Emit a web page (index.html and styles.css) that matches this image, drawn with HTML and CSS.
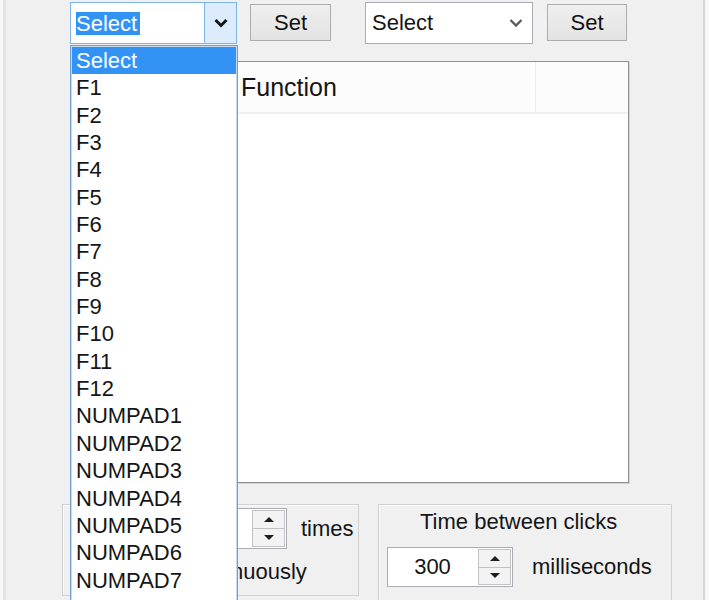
FILE: index.html
```html
<!DOCTYPE html>
<html lang="en">
<head>
  <meta charset="UTF-8">
  <meta name="viewport" content="width=device-width, initial-scale=1.0">
  <title>Hotkey Clicker</title>
  <link rel="stylesheet" href="styles.css">
</head>
<body>
  <div class="form">
    <div class="top-row">
      <div class="combo combo-focused">
        <span class="combo-text"><span class="selected-text">Select</span></span>
        <span class="combo-btn">
          <svg width="16" height="10" viewBox="0 0 16 10"><path d="M2.5 2 L8 7.5 L13.5 2" fill="none" stroke="#151515" stroke-width="3"/></svg>
        </span>
      </div>
      <button class="btn btn-first">Set</button>
      <div class="combo combo-plain">
        <span class="combo-text">Select</span>
        <span class="combo-btn">
          <svg width="16" height="10" viewBox="0 0 16 10"><path d="M2.5 2 L8 7.5 L13.5 2" fill="none" stroke="#5c5c5c" stroke-width="2.4"/></svg>
        </span>
      </div>
      <button class="btn btn-second">Set</button>
    </div>

    <div class="list-view">
      <div class="lv-header">
        <div class="lv-col col-key"></div>
        <div class="lv-col col-func">Function</div>
        <div class="lv-col col-rest"></div>
      </div>
    </div>

    <div class="bottom-row">
      <div class="group group-repeat">
        <div class="group-line">
          <div class="spin spin-repeat">
            <span class="spin-value">1</span>
            <span class="spin-btns">
              <span class="spin-up"><i class="tri-up"></i></span>
              <span class="spin-down"><i class="tri-down"></i></span>
            </span>
          </div>
          <span class="unit unit-times">times</span>
        </div>
        <label class="check-line"><span class="checkbox"></span>Run continuously</label>
      </div>

      <div class="group group-interval">
        <div class="group-title">Time between clicks</div>
        <div class="group-line interval-line">
          <div class="spin spin-interval">
            <span class="spin-value">300</span>
            <span class="spin-btns">
              <span class="spin-up"><i class="tri-up"></i></span>
              <span class="spin-down"><i class="tri-down"></i></span>
            </span>
          </div>
          <span class="unit unit-ms">milliseconds</span>
        </div>
      </div>
    </div>
  </div>

  <!-- open list of the first combo -->
  <ul class="dropdown">
    <li class="active">Select</li>
    <li>F1</li>
    <li>F2</li>
    <li>F3</li>
    <li>F4</li>
    <li>F5</li>
    <li>F6</li>
    <li>F7</li>
    <li>F8</li>
    <li>F9</li>
    <li>F10</li>
    <li>F11</li>
    <li>F12</li>
    <li>NUMPAD1</li>
    <li>NUMPAD2</li>
    <li>NUMPAD3</li>
    <li>NUMPAD4</li>
    <li>NUMPAD5</li>
    <li>NUMPAD6</li>
    <li>NUMPAD7</li>
  </ul>
</body>
</html>
```

FILE: styles.css
```css
* {
  margin: 0;
  padding: 0;
  box-sizing: border-box;
}

html {
  background: #f8f8f8;
}

body {
  position: relative;
  width: 709px;
  height: 600px;
  overflow: hidden;
  font-family: "Liberation Sans", Arial, sans-serif;
  font-size: 22px;
  color: #151515;
}

.form {
  margin-left: 3px;
  width: 702px;
  height: 600px;
  background: #f0f0f0;
  border-left: 3px solid #e4e4e4;
  border-right: 2px solid #d6d6d6;
  padding: 2px 0 0 56px;
}

/* top row: two combos and their Set buttons */
.top-row {
  display: flex;
  align-items: flex-start;
  margin-left: 8px;
  height: 42px;
}

.combo {
  display: flex;
  height: 42px;
  background: #fff;
  border: 1px solid #abadb3;
}

.combo-focused {
  width: 167px;
  border-color: #7eb4ea;
}

.combo-plain {
  width: 168px;
  margin-left: 34px;
}

.combo-text {
  flex: 1;
  display: flex;
  align-items: center;
  padding-left: 5px;
}

.combo-plain .combo-text {
  padding-left: 6px;
}

.selected-text {
  background: #3393f5;
  color: #fff;
  line-height: 23px;
  padding-right: 3px;
}

.combo-btn {
  width: 32px;
  display: flex;
  align-items: center;
  justify-content: center;
}

.combo-focused .combo-btn {
  background: #dcecfc;
  border-left: 1px solid #7eb4ea;
}

.btn {
  height: 37px;
  margin-top: 2px;
  font-family: inherit;
  font-size: 22px;
  color: #111;
  background: linear-gradient(#efefef, #e3e3e3);
  border: 1px solid #adadad;
}

.btn-first {
  width: 81px;
  margin-left: 13px;
}

.btn-second {
  width: 80px;
  margin-left: 14px;
}

/* list view */
.list-view {
  margin: 17px 0 0 8px;
  width: 559px;
  height: 422px;
  background: #fff;
  border: 1px solid #8f8f8f;
  box-shadow: inset 1px 1px 0 #c6c6c6, 1px 1px 0 #d4d4d4;
}

.lv-header {
  display: flex;
  height: 52px;
  background: #fcfcfc;
  border-bottom: 2px solid #eceef0;
}

.lv-col {
  display: flex;
  align-items: center;
  border-right: 1px solid #ededed;
}

.col-key {
  width: 162px;
}

.col-func {
  width: 303px;
  padding-left: 8px;
  font-size: 25px;
}

.col-rest {
  flex: 1;
  border-right: none;
}

/* group boxes */
.bottom-row {
  display: flex;
  gap: 19px;
  margin-top: 21px;
}

.group {
  border: 1px solid #d0d0d0;
  box-shadow: inset 1px 1px 0 #fafafa;
}

.group-repeat {
  width: 297px;
  height: 92px;
  padding-top: 3px;
}

.group-interval {
  width: 294px;
  height: 110px;
  padding: 4px 0 0 8px;
}

.group-line {
  display: flex;
  align-items: center;
}

.group-title {
  padding-left: 33px;
  line-height: 26px;
}

.interval-line {
  margin-top: 12px;
}

.spin {
  display: flex;
  background: #fff;
  border: 1px solid #abadb3;
}

.spin-repeat {
  margin-left: 100px;
  width: 124px;
  height: 41px;
}

.spin-interval {
  width: 126px;
  height: 40px;
}

.spin-value {
  flex: 1;
  display: flex;
  align-items: center;
  justify-content: center;
}

.spin-btns {
  width: 33px;
  margin: 1px;
  display: flex;
  flex-direction: column;
  border: 1px solid #c2c2c2;
}

.spin-up,
.spin-down {
  flex: 1;
  display: flex;
  align-items: center;
  justify-content: center;
  background: #f3f3f3;
}

.spin-up {
  border-bottom: 1px solid #c2c2c2;
}

.tri-up {
  border-left: 5px solid transparent;
  border-right: 5px solid transparent;
  border-bottom: 5px solid #1e1e1e;
}

.tri-down {
  border-left: 5px solid transparent;
  border-right: 5px solid transparent;
  border-top: 5px solid #1e1e1e;
}

.unit-times {
  margin-left: 14px;
}

.unit-ms {
  margin-left: 19px;
}

.check-line {
  display: flex;
  align-items: center;
  gap: 8px;
  height: 30px;
  margin-top: 8px;
  padding-left: 51px;
}

.checkbox {
  width: 16px;
  height: 16px;
  background: #fff;
  border: 1px solid #333;
}

/* open dropdown list */
.dropdown {
  position: absolute;
  left: 70px;
  top: 45px;
  width: 168px;
  height: 580px;
  list-style: none;
  background: #fff;
  border: 1px solid #6f9fd6;
  box-shadow: inset 0 0 0 1px #c4dbf2;
  padding: 1px;
}

.dropdown li {
  line-height: 27.35px;
  padding-left: 4px;
  white-space: nowrap;
}

.dropdown li.active {
  background: #3393f5;
  color: #fff;
}
```
